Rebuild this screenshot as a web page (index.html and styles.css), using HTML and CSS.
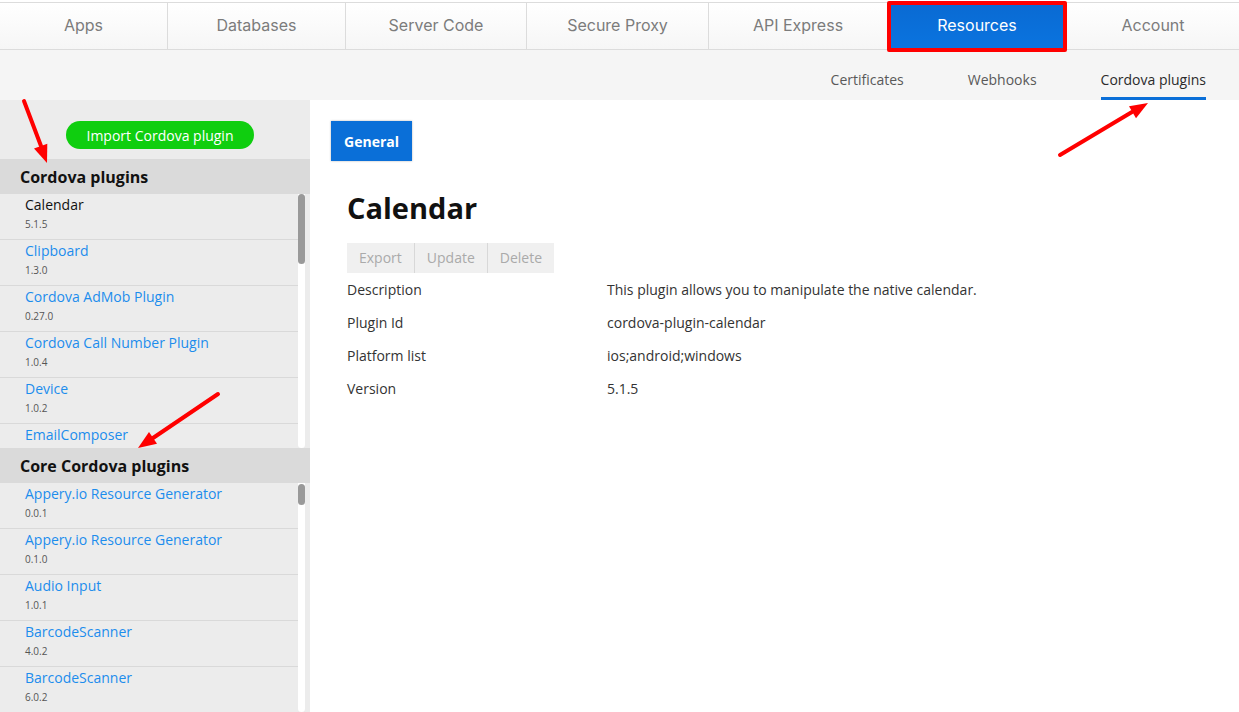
FILE: index.html
```html
<!DOCTYPE html>
<html lang="en">
<head>
    <meta charset="UTF-8">
    <meta name="viewport" content="width=device-width, initial-scale=1.0">
    <title>Resources - Cordova plugins</title>
    <link rel="stylesheet" href="styles.css">
</head>
<body>

    <header class="top-nav">
        <a href="#" class="tab">Apps</a>
        <a href="#" class="tab">Databases</a>
        <a href="#" class="tab">Server Code</a>
        <a href="#" class="tab">Secure Proxy</a>
        <a href="#" class="tab">API Express</a>
        <a href="#" class="tab active">Resources</a>
        <a href="#" class="tab">Account</a>
    </header>

    <nav class="sub-nav">
        <a href="#">Certificates</a>
        <a href="#">Webhooks</a>
        <a href="#" class="active">Cordova plugins</a>
    </nav>

    <div class="workspace">
        <aside class="sidebar">
            <div class="import-row">
                <button class="btn-import">Import Cordova plugin</button>
            </div>

            <h4 class="group-title">Cordova plugins</h4>
            <div class="plugin-list list-cordova">
                <ul class="items">
                    <li class="selected"><a href="#">Calendar</a><span>5.1.5</span></li>
                    <li><a href="#">Clipboard</a><span>1.3.0</span></li>
                    <li><a href="#">Cordova AdMob Plugin</a><span>0.27.0</span></li>
                    <li><a href="#">Cordova Call Number Plugin</a><span>1.0.4</span></li>
                    <li><a href="#">Device</a><span>1.0.2</span></li>
                    <li><a href="#">EmailComposer</a></li>
                </ul>
                <div class="track"><div class="thumb thumb-long"></div></div>
            </div>

            <h4 class="group-title">Core Cordova plugins</h4>
            <div class="plugin-list list-core">
                <ul class="items">
                    <li><a href="#">Appery.io Resource Generator</a><span>0.0.1</span></li>
                    <li><a href="#">Appery.io Resource Generator</a><span>0.1.0</span></li>
                    <li><a href="#">Audio Input</a><span>1.0.1</span></li>
                    <li><a href="#">BarcodeScanner</a><span>4.0.2</span></li>
                    <li><a href="#">BarcodeScanner</a><span>6.0.2</span></li>
                </ul>
                <div class="track"><div class="thumb thumb-short"></div></div>
            </div>
        </aside>

        <main class="content">
            <button class="btn-general">General</button>

            <div class="plugin-details">
                <h1>Calendar</h1>
                <div class="action-group">
                    <button>Export</button>
                    <button>Update</button>
                    <button>Delete</button>
                </div>
                <table class="info-table">
                    <tr><td>Description</td><td>This plugin allows you to manipulate the native calendar.</td></tr>
                    <tr><td>Plugin Id</td><td>cordova-plugin-calendar</td></tr>
                    <tr><td>Platform list</td><td>ios;android;windows</td></tr>
                    <tr><td>Version</td><td>5.1.5</td></tr>
                </table>
            </div>
        </main>
    </div>

    <!-- annotation overlay -->
    <div class="highlight-box"></div>
    <svg class="arrows" width="1239" height="712" viewBox="0 0 1239 712">
        <g stroke="#f00" stroke-width="4" stroke-linecap="round">
            <line x1="24" y1="101" x2="41" y2="146"/>
            <line x1="218" y1="394" x2="153" y2="438"/>
            <line x1="1060" y1="155" x2="1132" y2="112"/>
        </g>
        <g fill="#f00">
            <polygon points="47,163 34,148.5 47.3,143.7"/>
            <polygon points="138,448 149,432 157,443.7"/>
            <polygon points="1148,103 1136,118.2 1129,106.2"/>
        </g>
    </svg>

</body>
</html>
```

FILE: styles.css
```css
* {
    margin: 0;
    padding: 0;
    box-sizing: border-box;
}
body {
    font-family: "Open Sans", Arial, sans-serif;
    font-size: 14px;
    color: #333;
    background: #fff;
    width: 1239px;
    height: 712px;
    overflow: hidden;
    position: relative;
}
a {
    text-decoration: none;
}

/* top tabs */
.top-nav {
    display: grid;
    grid-template-columns: 167px 178px 181px 182px 179px 179px 1fr;
    margin-top: 2px;
    height: 48px;
    border-top: 1px solid #dcdcdc;
    border-bottom: 1px solid #dcdcdc;
    background: linear-gradient(#fff, #f6f6f6);
}
.tab {
    display: flex;
    align-items: center;
    justify-content: center;
    padding-bottom: 2px;
    font-family: Inter, "Liberation Sans", sans-serif;
    font-size: 16px;
    color: #7c7c7c;
    border-left: 1px solid #dcdcdc;
}
.tab:first-child {
    border-left: none;
}
.tab.active {
    background: linear-gradient(#0a6ad2, #0a74e0);
    color: #fff;
    border-left-color: #0a6ad2;
}

/* second row */
.sub-nav {
    display: flex;
    justify-content: flex-end;
    gap: 64px;
    height: 50px;
    padding-right: 33px;
    background: #f5f5f5;
}
.sub-nav a {
    display: block;
    padding-top: 20px;
    line-height: 20px;
    color: #595959;
    border-bottom: 3px solid transparent;
}
.sub-nav a.active {
    color: #2b2b2b;
    border-bottom-color: #0a6fd8;
}

.workspace {
    display: flex;
    height: 612px;
}

/* left column */
.sidebar {
    width: 310px;
    flex-shrink: 0;
    background: #ececec;
}
.import-row {
    height: 59px;
    padding: 21px 0 0 66px;
}
.btn-import {
    width: 188px;
    height: 28px;
    border: none;
    border-radius: 14px;
    background: #0fce0f;
    color: #fff;
    font-family: "Open Sans", Arial, sans-serif;
    font-size: 14px;
    cursor: pointer;
}
.group-title {
    height: 35px;
    line-height: 36px;
    padding-left: 20px;
    background: #dadada;
    font-size: 16px;
    font-weight: 700;
    color: #111;
}
.list-cordova {
    height: 254px;
}
.list-core {
    height: 229px;
}
.plugin-list {
    display: flex;
    overflow: hidden;
    padding-right: 5px;
}
.items {
    flex: 1;
    list-style: none;
}
.items li {
    height: 46px;
    padding: 1px 0 0 25px;
    border-bottom: 1px solid #d9d9d9;
}
.items a {
    display: block;
    line-height: 20px;
    color: #1c8ded;
}
.items li.selected a {
    color: #111;
}
.items span {
    display: block;
    padding-top: 1px;
    line-height: 17px;
    font-size: 10px;
    color: #555;
}
.track {
    width: 7px;
    background: #fff;
    border-radius: 0 0 4px 4px;
}
.thumb {
    background: #999;
    border-radius: 4px;
}
.thumb-long {
    height: 70px;
}
.thumb-short {
    height: 21px;
    margin-top: 1px;
}

/* right area */
.content {
    flex: 1;
    padding: 21px 0 0 21px;
    background: #fff;
}
.btn-general {
    width: 81px;
    height: 40px;
    border: none;
    background: #0a6fd8;
    color: #fff;
    font-family: "Open Sans", Arial, sans-serif;
    font-size: 14px;
    font-weight: 700;
    box-shadow: 0 0 2px rgba(0, 0, 0, 0.3);
}
.plugin-details {
    padding-left: 16px;
}
.plugin-details h1 {
    margin-top: 27px;
    font-size: 29px;
    line-height: 40px;
    font-weight: 700;
    color: #111;
}
.action-group {
    display: inline-flex;
    margin-top: 15px;
    background: #f0f0f0;
}
.action-group button {
    height: 30px;
    padding: 0 12px 1px;
    border: none;
    border-left: 1px solid #d8d8d8;
    background: #f0f0f0;
    color: #aaa;
    font-family: "Open Sans", Arial, sans-serif;
    font-size: 14px;
}
.action-group button:first-child {
    border-left: none;
}
.info-table {
    display: block;
    border-collapse: collapse;
}
.info-table td {
    height: 33px;
    padding: 0;
    vertical-align: middle;
    color: #333;
}
.info-table td:first-child {
    width: 260px;
}

/* annotations */
.highlight-box {
    position: absolute;
    left: 887px;
    top: 1px;
    width: 180px;
    height: 51px;
    border: 4px solid #f00;
    border-radius: 2px;
}
.arrows {
    position: absolute;
    left: 0;
    top: 0;
    pointer-events: none;
}
```
